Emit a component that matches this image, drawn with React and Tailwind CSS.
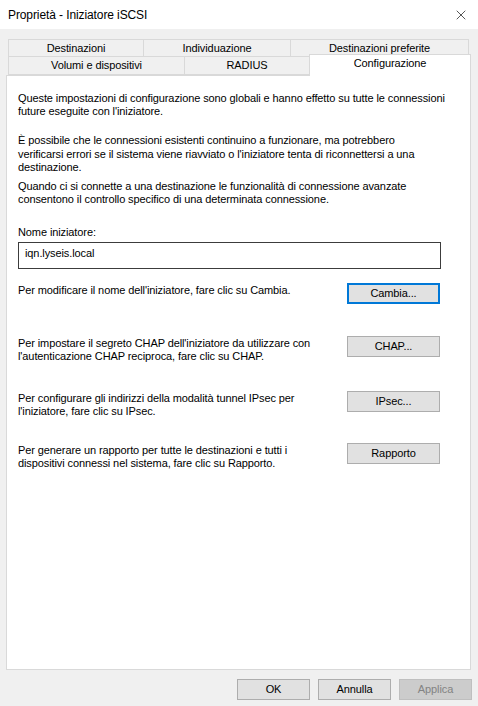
import { X } from "lucide-react";

const font = { fontFamily: "'Liberation Sans', Arial, sans-serif" };

function Tab({ label, className }) {
  return (
    <div
      className={
        "flex items-center justify-center border border-[#d9d9d9] bg-[#f0f0f0] text-[11px] leading-none text-black " +
        className
      }
    >
      {label}
    </div>
  );
}

function Btn({ label, width = "w-[93px]", look = "border border-[#adadad] bg-[#e1e1e1] text-black" }) {
  return (
    <div className={"flex h-[21px] items-center justify-center text-[11px] " + width + " " + look}>
      {label}
    </div>
  );
}

function Row({ lines, btn, look, className = "" }) {
  return (
    <div className={"flex items-start justify-between pr-[30px] " + className}>
      <div className="pt-[1px] text-[11px] leading-[13px]">
        {lines.map((l) => (
          <div key={l}>{l}</div>
        ))}
      </div>
      <Btn label={btn} look={look} />
    </div>
  );
}

export default function App() {
  return (
    <div className="flex h-[706px] w-[478px] flex-col bg-[#f0f0f0] tracking-[-0.1px] text-black" style={font}>
      <div className="flex h-[29px] items-center justify-between bg-white pl-[8px] pr-[9px]">
        <span className="text-[12px]">Proprietà - Iniziatore iSCSI</span>
        <X size={16} strokeWidth={1} />
      </div>

      <div className="mt-[10px] flex flex-col pl-[8px]">
        <div className="flex h-[18px]">
          <Tab label="Destinazioni" className="w-[136px]" />
          <Tab label="Individuazione" className="-ml-[1px] w-[148px]" />
          <Tab label="Destinazioni preferite" className="-ml-[1px] w-[179px]" />
        </div>
        <div className="-mt-[3px] flex h-[21px] items-end">
          <Tab label="Volumi e dispositivi" className="h-[19px] w-[177px]" />
          <Tab label="RADIUS" className="-ml-[1px] h-[19px] w-[126px]" />
          <div className="relative z-10 -ml-[1px] -mb-[1px] flex h-[22px] w-[162px] items-start justify-center border border-b-0 border-[#d9d9d9] bg-white pt-[3px] text-[11px] leading-none">
            Configurazione
          </div>
        </div>
      </div>

      <div className="ml-[6px] flex h-[595px] w-[465px] flex-col border border-[#d9d9d9] bg-white pl-[11px] pt-[16px]">
        <div className="text-[11px] leading-[13px]">
          <div>Queste impostazioni di configurazione sono globali e hanno effetto su tutte le connessioni</div>
          <div>future eseguite con l'iniziatore.</div>
        </div>
        <div className="mt-[16px] text-[11px] leading-[13.5px]">
          <div>È possibile che le connessioni esistenti continuino a funzionare, ma potrebbero</div>
          <div>verificarsi errori se il sistema viene riavviato o l'iniziatore tenta di riconnettersi a una</div>
          <div>destinazione.</div>
        </div>
        <div className="mt-[5px] text-[11px] leading-[13.5px]">
          <div>Quando ci si connette a una destinazione le funzionalità di connessione avanzate</div>
          <div>consentono il controllo specifico di una determinata connessione.</div>
        </div>

        <div className="mt-[19px] text-[11px] leading-[13px]">Nome iniziatore:</div>
        <div className="mt-[3px] flex h-[27px] w-[423px] items-start border border-[#3c3c3c] pl-[6px] pt-[4px] text-[11px] leading-[13px]">
          iqn.lyseis.local
        </div>

        <Row
          className="mt-[14px]"
          lines={["Per modificare il nome dell'iniziatore, fare clic su Cambia."]}
          btn="Cambia..."
          look="border-2 border-[#0078d7] bg-[#e1e1e1] text-black"
        />
        <Row
          className="mt-[32px]"
          lines={[
            "Per impostare il segreto CHAP dell'iniziatore da utilizzare con",
            "l'autenticazione CHAP reciproca, fare clic su CHAP.",
          ]}
          btn="CHAP..."
        />
        <Row
          className="mt-[28px]"
          lines={[
            "Per configurare gli indirizzi della modalità tunnel IPsec per",
            "l'iniziatore, fare clic su IPsec.",
          ]}
          btn="IPsec..."
        />
        <Row
          className="mt-[25px]"
          lines={[
            "Per generare un rapporto per tutte le destinazioni e tutti i",
            "dispositivi connessi nel sistema, fare clic su Rapporto.",
          ]}
          btn="Rapporto"
        />
      </div>

      <div className="mt-[9px] flex justify-end gap-[8px] pr-[6px]">
        <Btn label="OK" width="w-[73px]" />
        <Btn label="Annulla" width="w-[73px]" />
        <Btn label="Applica" width="w-[73px]" look="border border-[#bfbfbf] bg-[#cccccc] text-[#838383]" />
      </div>
    </div>
  );
}
